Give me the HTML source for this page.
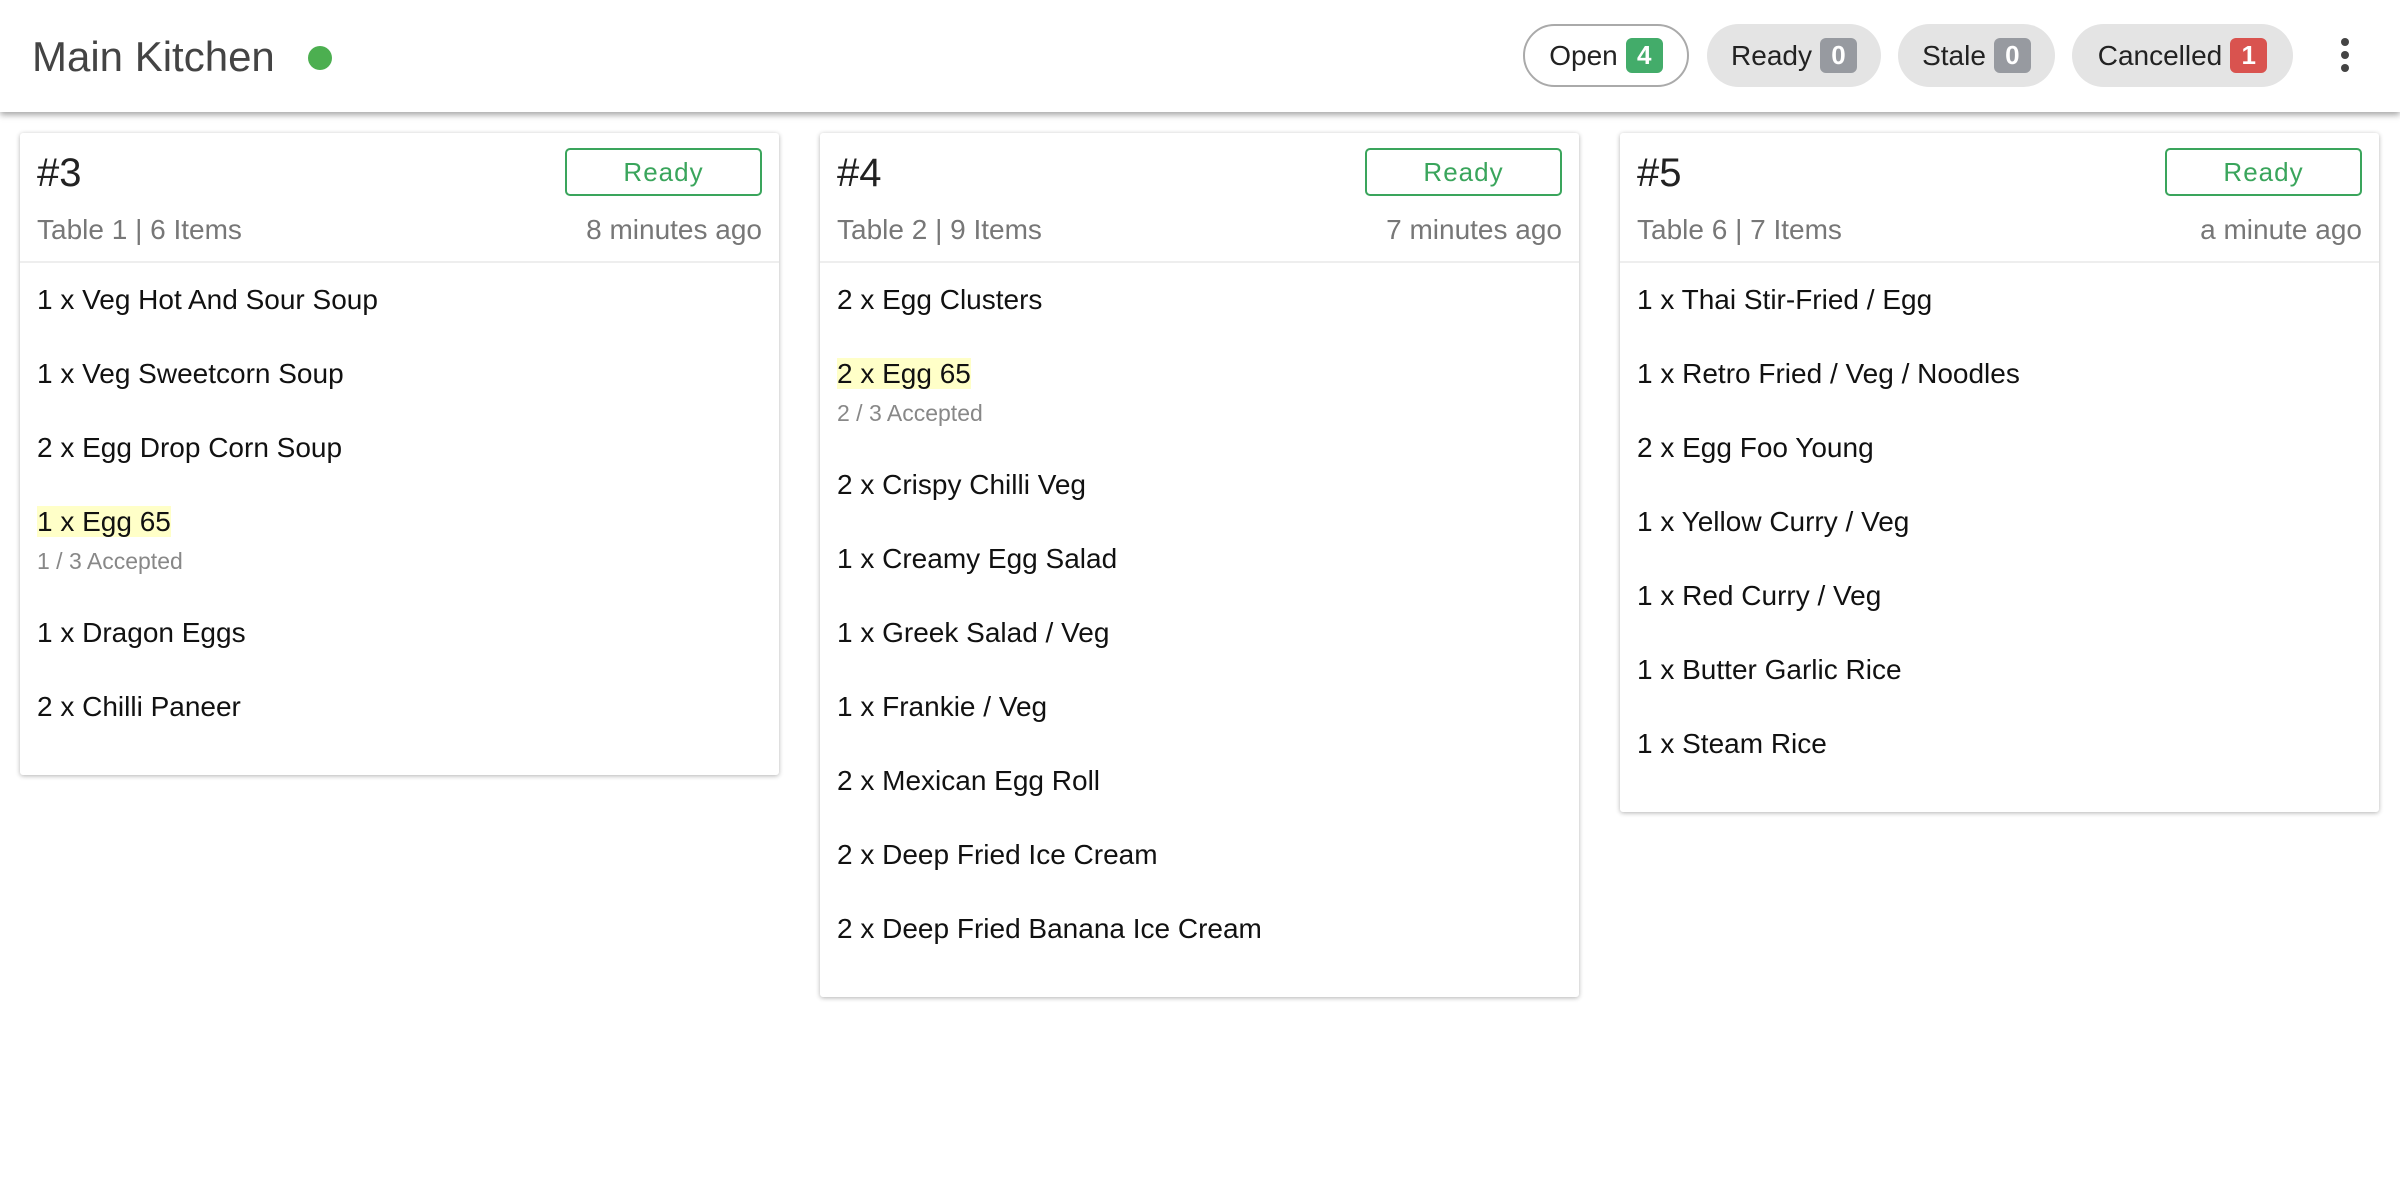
<!DOCTYPE html>
<html><head><meta charset="utf-8"><style>
*{box-sizing:border-box;margin:0;padding:0}
body{width:2400px;height:1200px;background:#fff;font-family:"Liberation Sans",Arial,sans-serif;position:relative;overflow:hidden}
.hdr{position:absolute;left:0;top:0;width:2400px;height:112px;background:#fff;box-shadow:0 3px 6px rgba(0,0,0,.35);z-index:2}
.title{position:absolute;left:32px;top:33px;font-size:42px;color:#444;line-height:48px}
.dot{position:absolute;left:308px;top:46px;width:24px;height:24px;border-radius:50%;background:#4caf50}
.pill{position:absolute;top:24px;height:63px;border-radius:32px;background:#e4e4e4;font-size:28px;color:#222;display:flex;align-items:center;justify-content:center;gap:8px}
.pill.open{background:#fff;border:2px solid #aaa}
.b{display:inline-block;min-width:37px;height:35px;border-radius:6px;color:#fff;font-size:26px;line-height:35px;text-align:center;font-weight:bold;padding:0 6px}
.kebab{position:absolute;left:2341px;top:38px;width:8px}
.kebab i{display:block;width:8px;height:8px;border-radius:50%;background:#444;margin-bottom:5px}
.card{position:absolute;top:133px;width:759px;background:#fff;box-shadow:0 1px 5px rgba(0,0,0,.3);border-radius:3px}
.ch{height:130px;border-bottom:2px solid #eee;position:relative}
.num{position:absolute;left:17px;top:18px;font-size:40px;color:#222;line-height:44px}
.btn{position:absolute;right:17px;top:15px;width:197px;height:48px;border:2px solid #3aa55c;border-radius:5px;color:#3aa55c;font-size:26px;text-align:center;line-height:44px;letter-spacing:1px}
.sub{position:absolute;left:17px;right:17px;top:80px;font-size:28px;color:#777;line-height:34px;display:flex;justify-content:space-between}
.items{padding-bottom:31px}
.it{padding:20px 17px;font-size:28px;line-height:34px;color:#111}
.hl{background:#ffffc8}
.acc{font-size:23px;color:#888;line-height:30px;margin-top:7px}
</style></head><body>
<div class="hdr">
<div class="title">Main Kitchen</div><div class="dot"></div>
<div class="pill open" style="left:1523px;width:166px">Open <span class="b" style="background:#43ac6a">4</span></div>
<div class="pill" style="left:1707px;width:174px">Ready <span class="b" style="background:#979aa0">0</span></div>
<div class="pill" style="left:1898px;width:157px">Stale <span class="b" style="background:#979aa0">0</span></div>
<div class="pill" style="left:2072px;width:221px">Cancelled <span class="b" style="background:#d9534f">1</span></div>
<div class="kebab"><i></i><i></i><i></i></div>
</div>

<div class="card" style="left:20px">
<div class="ch"><div class="num">#3</div><div class="btn">Ready</div><div class="sub"><span>Table 1 | 6 Items</span><span>8 minutes ago</span></div></div>
<div class="items">
<div class="it">1 x Veg Hot And Sour Soup</div>
<div class="it">1 x Veg Sweetcorn Soup</div>
<div class="it">2 x Egg Drop Corn Soup</div>
<div class="it"><span class="hl">1 x Egg 65</span><div class="acc">1 / 3 Accepted</div></div>
<div class="it">1 x Dragon Eggs</div>
<div class="it">2 x Chilli Paneer</div>
</div></div>

<div class="card" style="left:820px">
<div class="ch"><div class="num">#4</div><div class="btn">Ready</div><div class="sub"><span>Table 2 | 9 Items</span><span>7 minutes ago</span></div></div>
<div class="items">
<div class="it">2 x Egg Clusters</div>
<div class="it"><span class="hl">2 x Egg 65</span><div class="acc">2 / 3 Accepted</div></div>
<div class="it">2 x Crispy Chilli Veg</div>
<div class="it">1 x Creamy Egg Salad</div>
<div class="it">1 x Greek Salad / Veg</div>
<div class="it">1 x Frankie / Veg</div>
<div class="it">2 x Mexican Egg Roll</div>
<div class="it">2 x Deep Fried Ice Cream</div>
<div class="it">2 x Deep Fried Banana Ice Cream</div>
</div></div>

<div class="card" style="left:1620px">
<div class="ch"><div class="num">#5</div><div class="btn">Ready</div><div class="sub"><span>Table 6 | 7 Items</span><span>a minute ago</span></div></div>
<div class="items">
<div class="it">1 x Thai Stir-Fried / Egg</div>
<div class="it">1 x Retro Fried / Veg / Noodles</div>
<div class="it">2 x Egg Foo Young</div>
<div class="it">1 x Yellow Curry / Veg</div>
<div class="it">1 x Red Curry / Veg</div>
<div class="it">1 x Butter Garlic Rice</div>
<div class="it">1 x Steam Rice</div>
</div></div>
</body></html>
